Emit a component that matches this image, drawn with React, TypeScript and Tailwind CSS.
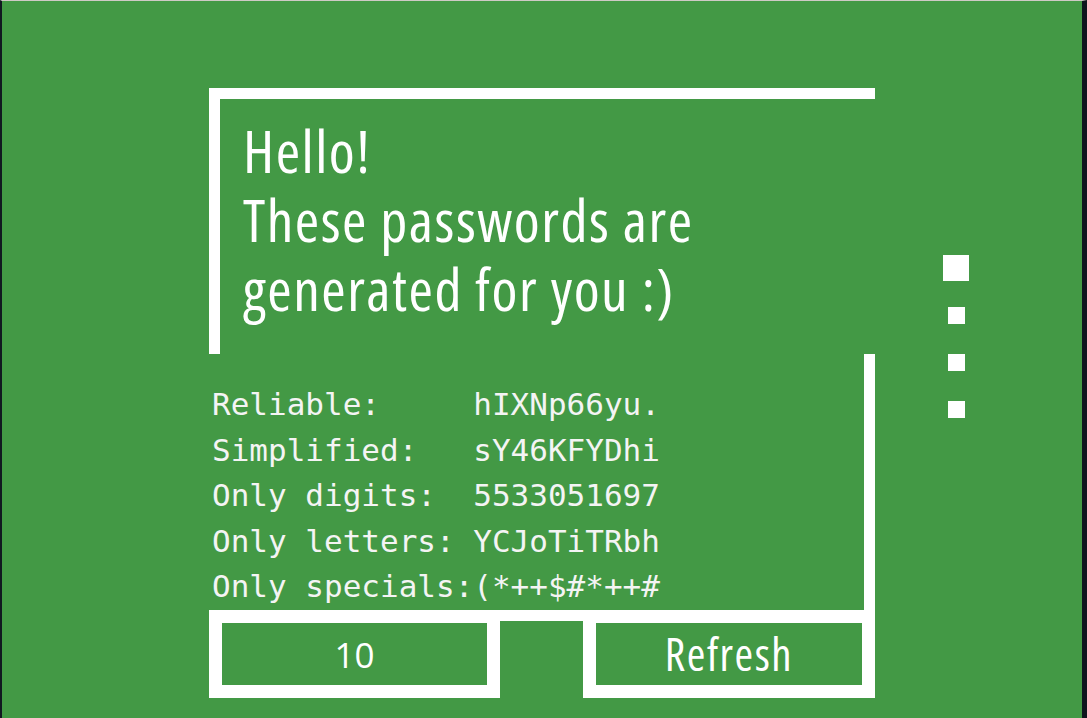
import React, { useState } from "react"

const narrow = { fontFamily: '"Open Sans", "DejaVu Sans Condensed", sans-serif', fontStretch: "75%" } as const

const passwords = [
  { label: "Reliable:", value: "hIXNp66yu." },
  { label: "Simplified:", value: "sY46KFYDhi" },
  { label: "Only digits:", value: "5533051697" },
  { label: "Only letters:", value: "YCJoTiTRbh" },
  { label: "Only specials:", value: "(*++$#*++#" },
]

export default function App() {
  const [length, setLength] = useState("10")

  return (
    <div className="h-[718px] w-full overflow-hidden bg-[#439945] border-t border-t-[#cfcac5] border-l-2 border-l-[#111820] border-r-[5px] border-r-[#0e151d]">
      <div className="flex items-start pt-[87px] pl-[207px]">
        {/* FRAME */}
        <div className="w-[666px] flex flex-col">
          <div className="h-[266px] border-t-[11px] border-l-[11px] border-white pl-[23px] pt-[17px]">
            <h1 className="text-white text-[59px] leading-[69px] tracking-[1.5px]" style={narrow}>
              Hello!<br />These passwords are<br />generated for you :)
            </h1>
          </div>

          <div className="h-[256px] border-r-[11px] border-white pl-[3px] pt-[28px]">
            {passwords.map((p) => (
              <div
                key={p.label}
                className="text-[#f4f4f4] text-[31px] leading-[45.5px] whitespace-pre"
                style={{ fontFamily: '"DejaVu Sans Mono", "Liberation Mono", monospace' }}
              >
                {p.label.padEnd(14, " ")}{p.value}
              </div>
            ))}
          </div>

          {/* BUTTONS */}
          <div className="flex items-start">
            <div className="w-[291px] h-[88px] border-[13px] border-white">
              <input
                type="text"
                value={length}
                onChange={(e) => setLength(e.target.value)}
                className="w-full h-full bg-transparent text-center text-white text-[35px] outline-none"
                style={{ fontFamily: '"Open Sans", "Noto Sans", sans-serif' }}
              />
            </div>
            <div className="flex-1 h-[11px] bg-white" />
            <button
              className="w-[292px] h-[88px] border-[13px] border-white flex items-center justify-center text-white text-[45px] tracking-[1.5px]"
              style={narrow}
            >
              Refresh
            </button>
          </div>
        </div>

        {/* PAGER */}
        <div className="ml-[68px] mt-[167px] w-[26px] flex flex-col items-center gap-[26px]">
          <div className="w-[26px] h-[26px] bg-white" />
          <div className="flex flex-col items-center gap-[30px]">
            <div className="w-[17px] h-[17px] bg-white" />
            <div className="w-[17px] h-[17px] bg-white" />
            <div className="w-[17px] h-[17px] bg-white" />
          </div>
        </div>
      </div>
    </div>
  )
}
